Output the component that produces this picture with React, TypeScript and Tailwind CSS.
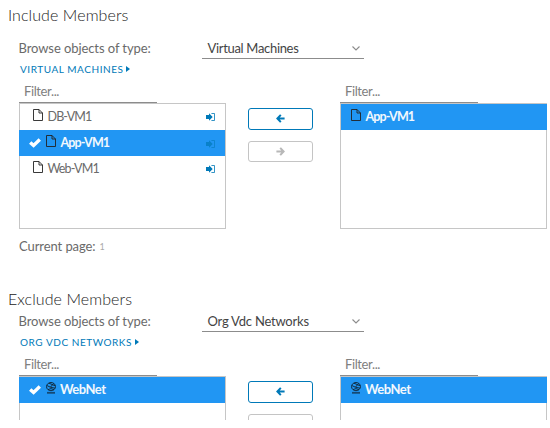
import React from "react";

type IconKind = "file" | "net";
type Row = { name: string; selected?: boolean };

function FileIcon() {
  return (
    <svg className="block h-[12px] w-[10px]" viewBox="0 0 10 12" fill="none" stroke="#222" strokeWidth="0.9">
      <path d="M0.5 0.5H6L9.5 4V11.5H0.5Z" />
      <path d="M6 0.5V4H9.5" />
    </svg>
  );
}

function NetIcon() {
  return (
    <svg className="block h-[12px] w-[10px]" viewBox="0 0 10 12" fill="none" stroke="#10212f" strokeWidth="0.9">
      <ellipse cx="5" cy="4.6" rx="4.5" ry="4.1" />
      <path d="M1 3.6L4.4 5.2L7.6 1.6M4.4 5.2L9 6.2M3 1.2L9 3.8M2 7.6L5 6.6L8 7.8" />
      <path d="M1 10.8H9" strokeOpacity="0.65" strokeWidth="1.8" />
    </svg>
  );
}

function Check() {
  return (
    <svg className="block h-[10px] w-[12px]" viewBox="0 0 12 10" fill="none" stroke="#fff" strokeWidth="3.4">
      <path d="M1.2 4.4L4.6 7.5L10.8 1.6" />
    </svg>
  );
}

function EnterIcon() {
  return (
    <svg className="block h-[8px] w-[9px]" viewBox="0 0 9 8">
      <path d="M0 2.1H3V0.3L6.7 4L3 7.7V5.9H0Z" fill="#0079b8" />
      <path d="M5.4 0.5H8.5V7.5H5.4" fill="none" stroke="#0079b8" strokeOpacity="0.8" strokeWidth="1" />
    </svg>
  );
}

function ArrowButton({ right = false }: { right?: boolean }) {
  return (
    <button
      className={
        right
          ? "flex h-[21px] w-[65px] items-center justify-center rounded-[3px] border border-[#c4c4c4] pr-px text-[#b8b8b8]"
          : "flex h-[22px] w-[65px] items-center justify-center rounded-[3px] border border-[#0079b8] pr-px text-[#0079b8]"
      }
    >
      <svg className={right ? "mb-px h-[9px] w-[9px] rotate-180" : "mb-px h-[9px] w-[9px]"} viewBox="0 0 9 9" fill="none" stroke="currentColor" strokeWidth="2">
        <path d="M4.8 0.9L1.4 4.5L4.8 8.1M1.6 4.5H8.6" />
      </svg>
    </button>
  );
}

function List({ rows, icon, source = false }: { rows: Row[]; icon: IconKind; source?: boolean }) {
  return (
    <div className="w-[207px]">
      <div className="h-[20px] w-[138px] border-b border-[#8c8c8c] pl-[5px] text-[13px] leading-[16px] tracking-[-0.38px] text-[#808080]">Filter...</div>
      <div className="h-[126px] border border-[#c6c6c6] bg-white">
        {rows.map((row) => (
          <div
            key={row.name}
            className={
              row.selected
                ? source
                  ? "-ml-px flex h-[26px] items-center bg-[#2196f3] pl-[10px] font-bold text-[#f2f8fd]"
                  : "-mr-px flex h-[26px] items-center bg-[#2196f3] pl-[10px] font-bold text-[#f2f8fd]"
                : "flex h-[26px] items-center pl-[13px] text-[#6a6a6a]"
            }
          >
            {row.selected && source && (
              <span className="mr-[5px]">
                <Check />
              </span>
            )}
            <span className="mb-[4px]">{icon === "file" ? <FileIcon /> : <NetIcon />}</span>
            <span
              className={
                icon === "file"
                  ? "ml-[4.5px] mt-[-1px] text-[12.5px] leading-[18px] tracking-[-0.88px]"
                  : "ml-[4px] mt-[-2px] text-[13px] leading-[18px] tracking-[-0.5px]"
              }
            >
              {row.name}
            </span>
            {source && icon === "file" && (
              <span className={row.selected ? "ml-auto mr-[10px] mt-px opacity-70" : "ml-auto mr-[10px]"}>
                <EnterIcon />
              </span>
            )}
          </div>
        ))}
      </div>
    </div>
  );
}

type PickerProps = { type: string; icon: IconKind; source: Row[]; target: Row[] };

function Picker({ type, icon, source, target }: PickerProps) {
  return (
    <div className="pl-[19px]">
      <div className="flex h-[21px]">
        <span className="-ml-[0.5px] w-[183px] text-[13px] leading-[20px] tracking-[-0.08px] text-[#6a6a6a]">Browse objects of type:</span>
        <div className="flex w-[162px] justify-between border-b border-[#8c8c8c] pl-[6px] pr-[4px] text-[13px] leading-[20px] text-[#444]">
          <span className={icon === "file" ? "tracking-[-0.32px]" : "tracking-[-0.22px]"}>{type}</span>
          <svg className="mt-[8px] h-[5px] w-[8px]" viewBox="0 0 8 5" fill="none" stroke="#8c8c8c" strokeWidth="1.1">
            <path d="M0.5 0.5L4 4L7.5 0.5" />
          </svg>
        </div>
      </div>
      <div className="mt-[2px] flex h-[16px] items-center pl-px text-[10px] leading-[16px] tracking-[0.55px] text-[#0079b8]">
        <span className="uppercase">{type}</span>
        <svg className="ml-[3px] h-[6px] w-[4px]" viewBox="0 0 4 6" fill="#0079b8">
          <path d="M0 0L4 3L0 6Z" />
        </svg>
      </div>
      <div className="mt-[6px] flex">
        <List rows={source} icon={icon} source />
        <div className="ml-[22px] mr-[27px] flex flex-col gap-[11px] pt-[25px]">
          <ArrowButton />
          <ArrowButton right />
        </div>
        <List rows={target} icon={icon} />
      </div>
    </div>
  );
}

export default function App() {
  return (
    <div className="h-[428px] w-[550px] overflow-hidden bg-white font-['Lato',sans-serif]">
      <div className="h-[420px] overflow-hidden">
        <h2 className="h-[38px] pl-[8px] pt-[3px] text-[16px] font-light leading-[24px] tracking-[0.08px] text-[#222]">Include Members</h2>
        <Picker
          type="Virtual Machines"
          icon="file"
          source={[{ name: "DB-VM1" }, { name: "App-VM1", selected: true }, { name: "Web-VM1" }]}
          target={[{ name: "App-VM1", selected: true }]}
        />
        <div className="flex h-[59px] pl-[19px] pt-[7px] text-[13px] leading-[20px] text-[#6a6a6a]">
          <span className="tracking-[-0.08px]">Current page:</span>
          <span className="ml-[4px] text-[9px] leading-[22px] text-[#aaa]">1</span>
        </div>
        <h2 className="h-[23px] pl-[8px] text-[16px] font-light leading-[22px] tracking-[0.08px] text-[#222]">Exclude Members</h2>
        <Picker
          type="Org Vdc Networks"
          icon="net"
          source={[{ name: "WebNet", selected: true }]}
          target={[{ name: "WebNet", selected: true }]}
        />
      </div>
    </div>
  );
}
